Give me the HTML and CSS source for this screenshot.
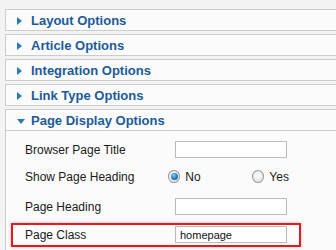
FILE: index.html
```html
<!DOCTYPE html>
<html lang="en">
<head>
  <meta charset="UTF-8">
  <title>Menu Item Options</title>
  <link rel="stylesheet" href="styles.css">
</head>
<body>
  <div class="panes">
    <div class="pane">
      <div class="pane-head"><span class="arrow closed"></span>Layout Options</div>
    </div>
    <div class="pane">
      <div class="pane-head"><span class="arrow closed"></span>Article Options</div>
    </div>
    <div class="pane">
      <div class="pane-head"><span class="arrow closed"></span>Integration Options</div>
    </div>
    <div class="pane">
      <div class="pane-head"><span class="arrow closed"></span>Link Type Options</div>
    </div>
    <div class="pane open">
      <div class="pane-head"><span class="arrow"></span>Page Display Options</div>
      <div class="pane-body">
        <div class="row first">
          <label class="label">Browser Page Title</label>
          <input class="field" type="text" value="">
        </div>
        <div class="row radios">
          <label class="label">Show Page Heading</label>
          <span class="radio checked"></span><span class="opt">No</span>
          <span class="radio"></span><span class="opt">Yes</span>
        </div>
        <div class="row heading">
          <label class="label">Page Heading</label>
          <input class="field" type="text" value="">
        </div>
        <div class="row highlight">
          <label class="label">Page Class</label>
          <input class="field" type="text" value="homepage">
        </div>
      </div>
    </div>
  </div>
</body>
</html>
```

FILE: styles.css
```css
*, *::before, *::after {
  box-sizing: border-box;
}

body {
  margin: 0;
  height: 250px;
  background-color: #f3f3f3;
  font-family: "Liberation Sans", Arial, sans-serif;
  overflow: hidden;
}

.panes {
  padding: 9px 0 0 5px;
}

.pane {
  border: 1px solid #cccccc;
  border-right: 0;
  background-color: #fbfbfb;
  margin-bottom: 3px;
}

.pane-head {
  height: 20px;
  display: flex;
  align-items: center;
  padding-left: 11px;
  font-size: 13px;
  font-weight: bold;
  color: #1b5a98;
}

.pane.open .pane-head {
  border-bottom: 1px solid #cccccc;
  height: 21px;
}

.arrow {
  width: 0;
  height: 0;
  border-top: 4px solid transparent;
  border-bottom: 4px solid transparent;
  border-left: 5px solid #2a7ab8;
  margin-right: 9px;
  margin-top: 1px;
}

.pane.open .arrow {
  border-left: 4.5px solid transparent;
  border-right: 4.5px solid transparent;
  border-top: 5px solid #2a7ab8;
  border-bottom: 0;
  margin-right: 6px;
  margin-top: 2px;
}

.pane.open {
  margin-bottom: 0;
  border-bottom: 0;
}

.pane-body {
  height: 119px;
  padding-left: 19px;
}

.row {
  display: flex;
  align-items: center;
  font-size: 12px;
  color: #1a1a1a;
}

.label {
  width: 150px;
}

.field {
  width: 112px;
  height: 17px;
  border: 1px solid #bbbbbb;
  background-color: #ffffff;
  font-family: inherit;
  font-size: 11px;
  padding: 0 0 0 4px;
  color: #111;
  outline: none;
}

.row.first {
  margin-top: 10px;
}

.row.radios {
  margin-top: 11px;
  height: 15px;
}

.row.heading {
  margin-top: 14px;
}

.radio {
  width: 13px;
  height: 13px;
  border-radius: 50%;
  border: 1px solid #9a9a9a;
  background: radial-gradient(circle at 50% 40%, #ffffff 0, #e4e4e4 70%, #d0d0d0 100%);
  display: flex;
  align-items: center;
  justify-content: center;
}

.radio.checked::after {
  content: "";
  width: 7px;
  height: 7px;
  border-radius: 50%;
  background: radial-gradient(circle at 40% 35%, #8fd0f5 0, #2a86c4 45%, #0f4f86 100%);
}

.opt {
  margin-left: 5px;
  width: 70px;
}

.row.highlight {
  margin: 8px 0 0 -14px;
  width: 290px;
  height: 24px;
  padding: 1px 0 2px 12px;
  border: 2px solid #e01b22;
  box-shadow: 0 0 3px rgba(224, 27, 34, 0.35);
}
```
